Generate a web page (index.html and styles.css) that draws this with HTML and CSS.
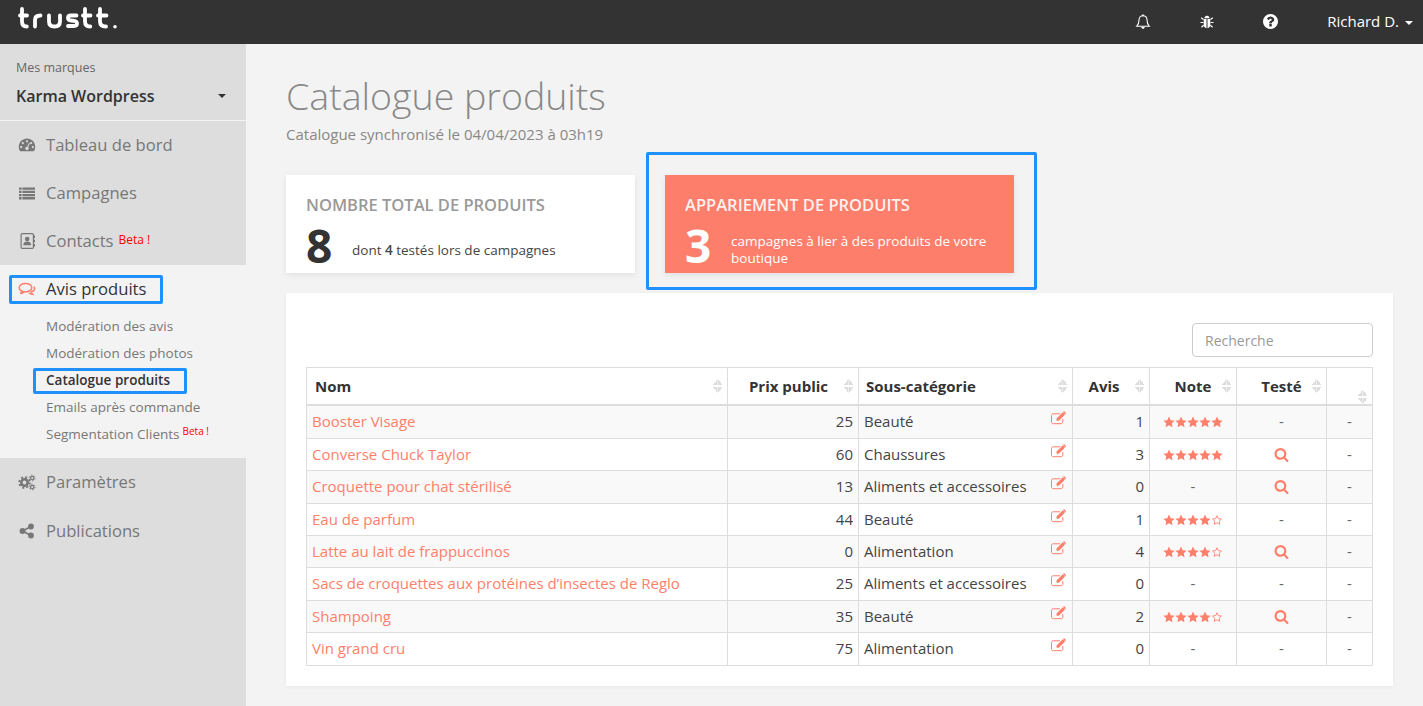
FILE: index.html
```html
<!DOCTYPE html>
<html lang="fr">
<head>
<meta charset="utf-8">
<title>Catalogue produits</title>
<link rel="stylesheet" href="styles.css">
</head>
<body>
<svg class="defs" width="0" height="0" aria-hidden="true">
  <symbol id="i-star" viewBox="0 0 24 24"><path d="M12 1l3.400 7.300 7.900 1-5.800 5.400 1.500 7.900-7-3.900-7 3.900 1.500-7.900L.7 9.300l7.900-1z"/></symbol>
  <symbol id="i-star-o" viewBox="0 0 24 24"><path fill="none" stroke="currentColor" stroke-width="1.800" d="M12 3.500l2.700 5.800 6.200.8-4.500 4.300 1.100 6.200-5.500-3-5.500 3 1.100-6.200-4.500-4.300 6.200-.8z"/></symbol>
  <symbol id="i-search" viewBox="0 0 1792 1792"><path d="M1216 832q0-185-131.500-316.500t-316.500-131.500-316.500 131.500-131.500 316.500 131.500 316.500 316.500 131.500 316.500-131.500 131.500-316.500zm512 832q0 52-38 90t-90 38q-54 0-90-38l-343-342q-179 124-399 124-143 0-273.500-55.500t-225-150-150-225-55.500-273.500 55.500-273.500 150-225 225-150 273.500-55.500 273.500 55.500 225 150 150 225 55.500 273.500q0 220-124 399l343 343q37 37 37 90z"/></symbol>
  <symbol id="i-edit" viewBox="0 0 16 14"><path fill="none" stroke="currentColor" stroke-width="1" d="M11.800 8v3c0 1-.7 1.700-1.700 1.700H2.200C1.200 12.700.5 12 .5 11V4.500c0-1 .7-1.700 1.700-1.700H9"/><path d="M5.500 7.500L11.800 1.200l2.300 2.300-6.300 6.300H5.500zM12.500.5c.3-.3.700-.3 1 0l1.300 1.300c.3.300.3.700 0 1l-.4.400-2.300-2.300z"/></symbol>
</svg>

<header class="topbar">
  <svg class="logo" width="100" height="24" viewBox="0 0 100 24" role="img" aria-label="trustt">
    <g fill="none" stroke="#fff" stroke-width="3.800" stroke-linecap="round" stroke-linejoin="round">
      <path d="M4 3v12.500c0 3.300 1.500 5 4.800 5M2 9.500h7"/>
      <path d="M17 20.500v-6.500c0-3 1.500-4.500 5.500-4.500"/>
      <path d="M31 9.500v6c0 3.300 2 5 5.500 5s5.500-1.700 5.500-5v-6"/>
      <path d="M58.500 9.500h-5.500c-2 0-3 1-3 2.500s1 2.300 3 2.500l3 .3c2 .2 3 1 3 2.700s-1 2.500-3 2.500h-6"/>
      <path d="M67 3v12.500c0 3.300 1.500 5 5.300 5M65 9.500h7.500"/>
      <path d="M82 3v12.500c0 3.300 1.500 5 6 5M80 9.500h8.500"/>
    </g>
    <circle cx="97" cy="20.800" r="1.800" fill="#fff"/>
  </svg>
  <nav class="topnav">
    <svg class="top-icon" width="16" height="16" viewBox="0 0 16 16" aria-hidden="true"><path fill="none" stroke="#fff" stroke-width="1.100" d="M8 1.800c2.600 0 4 2 4 4.300 0 3.400 1 5 2.300 6.200H1.700C3 11.100 4 9.500 4 6.100 4 3.800 5.400 1.800 8 1.800z"/><path fill="#fff" d="M6.300 13h3.400c0 1-.8 1.800-1.700 1.800S6.300 14 6.300 13zM7.200.6h1.600v1.600H7.200z"/></svg>
    <svg class="top-icon" width="16" height="16" viewBox="0 0 16 16" aria-hidden="true"><g fill="#fff"><path d="M4.700 5h2.800v9.200c-1.800-.2-2.800-1.500-2.800-3.600zM8.500 5h2.800v5.600c0 2.100-1 3.400-2.800 3.600zM5.400 4.200C5.500 2.700 6.500 1.700 8 1.700s2.500 1 2.600 2.500z"/></g><path fill="none" stroke="#fff" stroke-width="1.200" d="M4.500 5.500L2.200 3.700M11.500 5.500l2.300-1.800M1.500 8.500h3M11.500 8.500h3M4.700 11.300l-2.300 2M11.300 11.300l2.300 2"/></svg>
    <svg class="top-icon" width="15" height="15" viewBox="128 128 1536 1536" aria-hidden="true"><path fill="#fff" d="M1024 1376v-192q0-14-9-23t-23-9h-192q-14 0-23 9t-9 23v192q0 14 9 23t23 9h192q14 0 23-9t9-23zm256-672q0-88-55.500-163t-138.500-116-170-41q-243 0-371 213-15 24 8 42l132 100q7 6 19 6 16 0 25-12 53-68 86-92 34-24 86-24 48 0 85.500 26t37.500 59q0 38-20 61t-68 45q-63 28-115.500 86.500t-52.500 125.500v36q0 14 9 23t23 9h192q14 0 23-9t9-23q0-19 21.500-49.500t54.500-49.500q32-18 49-28.500t46-35 44.500-48 28-60.500 12.500-81zm384 192q0 209-103 385.500t-279.500 279.500-385.500 103-385.500-103-279.500-279.500-103-385.500 103-385.500 279.500-279.500 385.500-103 385.500 103 279.500 279.500 103 385.500z"/></svg>
    <span class="user">Richard D.<span class="caret caret-white"></span></span>
  </nav>
</header>

<div class="shell">
  <aside class="sidebar">
    <div class="brand">
      <div class="brand-label">Mes marques</div>
      <div class="brand-name"><span>Karma Wordpress</span><span class="caret caret-dark"></span></div>
    </div>
    <ul class="menu">
      <li class="menu-item">
        <svg class="menu-icon" width="18" height="18" viewBox="0 0 18 18" aria-hidden="true"><path fill="currentColor" fill-rule="evenodd" d="M9 2.500c4.500 0 8.200 3.600 8.200 8.200 0 1.700-.5 3.200-1.300 4.500H2.100C1.300 13.900.8 12.400.8 10.700.8 6.100 4.500 2.500 9 2.500zM9 4.200a1.100 1.100 0 100 2.200 1.100 1.100 0 000-2.200zM4.800 6a1.100 1.100 0 100 2.200 1.100 1.100 0 000-2.200zM13.200 6a1.100 1.100 0 100 2.200 1.100 1.100 0 000-2.200zM3.100 10a1.100 1.100 0 100 2.200 1.100 1.100 0 000-2.200zM14.900 10a1.100 1.100 0 100 2.200 1.100 1.100 0 000-2.200zM11 6.800L9.200 10.700a1.700 1.700 0 10.900.400L12 7.200z"/></svg>
        <span>Tableau de bord</span>
      </li>
      <li class="menu-item">
        <svg class="menu-icon" width="18" height="18" viewBox="0 0 18 18" aria-hidden="true"><path fill="currentColor" d="M1 3.500h2.600v2.300H1zM4.400 3.500H17v2.300H4.400zM1 6.700h2.600V9H1zM4.400 6.700H17V9H4.400zM1 9.900h2.600v2.300H1zM4.400 9.900H17v2.300H4.400zM1 13.100h2.600v2.300H1zM4.400 13.100H17v2.300H4.400z"/></svg>
        <span>Campagnes</span>
      </li>
      <li class="menu-item">
        <svg class="menu-icon" width="18" height="18" viewBox="0 0 18 18" aria-hidden="true"><rect x="3.100" y="1.600" width="12.300" height="14.800" rx="1.200" fill="none" stroke="currentColor" stroke-width="1.200"/><path fill="currentColor" d="M15.800 3.500h1.200v2.500h-1.200zM15.800 7.800h1.200v2.500h-1.200zM15.800 12h1.200v2.500h-1.200z"/><circle cx="9.200" cy="7" r="2.300" fill="currentColor"/><path fill="currentColor" d="M5.300 13.300c0-2.500 1.300-3.700 3.900-3.700s3.900 1.200 3.900 3.700z"/></svg>
        <span>Contacts</span><sup class="beta">Beta !</sup>
      </li>
    </ul>
    <div class="menu-open">
      <div class="menu-item menu-item-active">
        <svg class="menu-icon menu-icon-accent" width="18" height="18" viewBox="0 0 18 18" aria-hidden="true"><g fill="none" stroke="currentColor" stroke-width="1.500"><ellipse cx="7.500" cy="7.700" rx="6.300" ry="4.300"/><path d="M4 11.200c-.3 1.100-.9 1.800-1.700 2.300 1.500-.1 2.700-.6 3.700-1.500"/><path d="M11 12.800c.8.900 1.900 1.400 3.600 1.500-.7-.6-1.200-1.300-1.300-2.300 2-.6 3.300-1.900 3.300-3.400 0-.8-.3-1.500-.9-2.100"/></g></svg>
        <span>Avis produits</span>
      </div>
      <ul class="submenu">
        <li class="sub-item">Modération des avis</li>
        <li class="sub-item">Modération des photos</li>
        <li class="sub-item sub-item-active">Catalogue produits</li>
        <li class="sub-item">Emails après commande</li>
        <li class="sub-item">Segmentation Clients<sup class="beta beta-small">Beta !</sup></li>
      </ul>
    </div>
    <ul class="menu">
      <li class="menu-item">
        <svg class="menu-icon" width="18" height="18" viewBox="0 0 18 18" aria-hidden="true"><g fill="none" stroke="currentColor"><circle cx="6.500" cy="9.500" r="3.200" stroke-width="2.600"/><circle cx="6.500" cy="9.500" r="5.300" stroke-width="1.800" stroke-dasharray="2.100 2.060"/><circle cx="14.200" cy="5" r="1.700" stroke-width="1.200"/><circle cx="14.200" cy="5" r="2.900" stroke-width="1" stroke-dasharray="1.400 1.640"/><circle cx="14.200" cy="14" r="1.700" stroke-width="1.200"/><circle cx="14.200" cy="14" r="2.900" stroke-width="1" stroke-dasharray="1.400 1.640"/></g></svg>
        <span>Paramètres</span>
      </li>
      <li class="menu-item menu-item-last">
        <svg class="menu-icon" width="18" height="18" viewBox="0 0 18 18" aria-hidden="true"><g fill="currentColor"><circle cx="4.500" cy="9" r="2.900"/><circle cx="13" cy="4.500" r="2.900"/><circle cx="13" cy="13.500" r="2.900"/></g><path stroke="currentColor" stroke-width="1.500" d="M4.500 9L13 4.500M4.500 9L13 13.500"/></svg>
        <span>Publications</span>
      </li>
    </ul>
  </aside>

  <main class="content">
    <h1 class="page-title">Catalogue produits</h1>
    <p class="page-sub">Catalogue synchronisé le 04/04/2023 à 03h19</p>

    <section class="stats">
      <div class="stat">
        <h2 class="stat-title">NOMBRE TOTAL DE PRODUITS</h2>
        <div class="stat-body"><span class="stat-num">8</span><span class="stat-text">dont <b>4</b> testés lors de campagnes</span></div>
      </div>
      <div class="stat stat-accent">
        <h2 class="stat-title">APPARIEMENT DE PRODUITS</h2>
        <div class="stat-body"><span class="stat-num">3</span><span class="stat-text">campagnes à lier à des produits de votre boutique</span></div>
      </div>
    </section>

    <section class="panel">
      <div class="toolbar"><input class="search" type="text" placeholder="Recherche"></div>
      <table class="products">
        <colgroup>
          <col class="c-name"><col class="c-price"><col class="c-cat"><col class="c-avis"><col class="c-note"><col class="c-test"><col class="c-last">
        </colgroup>
        <thead>
          <tr>
            <th class="th-left">Nom<span class="sort"></span></th>
            <th class="th-price">Prix public<span class="sort"></span></th>
            <th class="th-left th-cat">Sous-catégorie<span class="sort"></span></th>
            <th class="th-avis">Avis<span class="sort"></span></th>
            <th>Note<span class="sort"></span></th>
            <th>Testé<span class="sort"></span></th>
            <th><span class="sort sort-low"></span></th>
          </tr>
        </thead>
        <tbody>
          <tr><td class="name">Booster Visage</td><td class="num">25</td><td>Beauté<svg class="edit"><use href="#i-edit"/></svg></td><td class="num">1</td><td class="mid"><span class="stars"><svg><use href="#i-star"/></svg><svg><use href="#i-star"/></svg><svg><use href="#i-star"/></svg><svg><use href="#i-star"/></svg><svg><use href="#i-star"/></svg></span></td><td class="mid">-</td><td class="mid">-</td></tr>
          <tr><td class="name">Converse Chuck Taylor</td><td class="num">60</td><td>Chaussures<svg class="edit"><use href="#i-edit"/></svg></td><td class="num">3</td><td class="mid"><span class="stars"><svg><use href="#i-star"/></svg><svg><use href="#i-star"/></svg><svg><use href="#i-star"/></svg><svg><use href="#i-star"/></svg><svg><use href="#i-star"/></svg></span></td><td class="mid"><svg class="loupe"><use href="#i-search"/></svg></td><td class="mid">-</td></tr>
          <tr><td class="name">Croquette pour chat stérilisé</td><td class="num">13</td><td>Aliments et accessoires<svg class="edit"><use href="#i-edit"/></svg></td><td class="num">0</td><td class="mid">-</td><td class="mid"><svg class="loupe"><use href="#i-search"/></svg></td><td class="mid">-</td></tr>
          <tr><td class="name">Eau de parfum</td><td class="num">44</td><td>Beauté<svg class="edit"><use href="#i-edit"/></svg></td><td class="num">1</td><td class="mid"><span class="stars"><svg><use href="#i-star"/></svg><svg><use href="#i-star"/></svg><svg><use href="#i-star"/></svg><svg><use href="#i-star"/></svg><svg><use href="#i-star-o"/></svg></span></td><td class="mid">-</td><td class="mid">-</td></tr>
          <tr><td class="name">Latte au lait de frappuccinos</td><td class="num">0</td><td>Alimentation<svg class="edit"><use href="#i-edit"/></svg></td><td class="num">4</td><td class="mid"><span class="stars"><svg><use href="#i-star"/></svg><svg><use href="#i-star"/></svg><svg><use href="#i-star"/></svg><svg><use href="#i-star"/></svg><svg><use href="#i-star-o"/></svg></span></td><td class="mid"><svg class="loupe"><use href="#i-search"/></svg></td><td class="mid">-</td></tr>
          <tr><td class="name">Sacs de croquettes aux protéines d’insectes de Reglo</td><td class="num">25</td><td>Aliments et accessoires<svg class="edit"><use href="#i-edit"/></svg></td><td class="num">0</td><td class="mid">-</td><td class="mid">-</td><td class="mid">-</td></tr>
          <tr><td class="name">Shampoing</td><td class="num">35</td><td>Beauté<svg class="edit"><use href="#i-edit"/></svg></td><td class="num">2</td><td class="mid"><span class="stars"><svg><use href="#i-star"/></svg><svg><use href="#i-star"/></svg><svg><use href="#i-star"/></svg><svg><use href="#i-star"/></svg><svg><use href="#i-star-o"/></svg></span></td><td class="mid"><svg class="loupe"><use href="#i-search"/></svg></td><td class="mid">-</td></tr>
          <tr><td class="name">Vin grand cru</td><td class="num">75</td><td>Alimentation<svg class="edit"><use href="#i-edit"/></svg></td><td class="num">0</td><td class="mid">-</td><td class="mid">-</td><td class="mid">-</td></tr>
        </tbody>
      </table>
    </section>
  </main>
</div>
</body>
</html>
```

FILE: styles.css
```css
*, *::before, *::after { box-sizing: border-box; }
html, body { height: 100%; }
body {
  margin: 0;
  overflow: hidden;
  background: #f3f3f3;
  color: #444;
  font-family: "Open Sans", "Liberation Sans", sans-serif;
  font-size: 15px;
  line-height: 1.42857;
  display: flex;
  flex-direction: column;
}
.defs { position: absolute; }
ul { list-style: none; margin: 0; padding: 0; }

.topbar {
  flex: 0 0 44px;
  background: #333;
  display: flex;
  align-items: center;
  justify-content: space-between;
  padding: 0 10px 0 18px;
}
.logo { display: block; margin-top: -8px; }
.topnav { display: flex; align-items: center; }
.top-icon { display: block; margin-right: 48px; }
.user { color: #fff; font-size: 15px; margin-left: 1px; }
.caret {
  display: inline-block;
  width: 0; height: 0;
  border-left: 4px solid transparent;
  border-right: 4px solid transparent;
  border-top: 4px solid #fff;
}
.caret-white { margin-left: 6px; vertical-align: 2px; }
.caret-dark { border-top-color: #333; }

.shell { flex: 1; display: flex; min-height: 0; }
.sidebar { flex: 0 0 246px; background: #ddd; color: #777; }
.brand { padding: 14px 20px 9px 16px; border-bottom: 1px solid #f3f3f3; height: 77px; }
.brand-label { font-size: 12.500px; color: #666; line-height: 20px; }
.brand-name {
  display: flex; align-items: center; justify-content: space-between;
  font-size: 16px; font-weight: 600; color: #333; line-height: 24px; margin-top: 6px;
}
.menu-item {
  height: 48px;
  display: flex; align-items: center;
  padding-left: 18px;
  font-size: 16.600px;
  color: #777;
  position: relative;
}
.menu-item-last { margin-top: 1px; }
.menu-icon { flex: none; margin-right: 10px; color: #777; }
.menu-icon-accent { color: #ff7f6b; }
.beta { color: #f00; font-size: 12px; margin-left: 5px; line-height: 1; align-self: center; margin-top: -3px; }
.menu-open { background: #f3f3f3; height: 193px; }
.menu-item-active { color: #333; }
.menu-item-active::after {
  content: "";
  position: absolute;
  left: 9px; top: 10px;
  width: 154px; height: 29px;
  border: 3px solid #1e90ff;
  border-radius: 2px;
}
.sub-item {
  height: 27px; line-height: 27px;
  padding-left: 46px;
  font-size: 13.500px;
  color: #777;
  position: relative;
}
.sub-item-active { color: #333; font-weight: 600; }
.sub-item-active::after {
  content: "";
  position: absolute;
  left: 33px; top: 1px;
  width: 154px; height: 26px;
  border: 3px solid #1e90ff;
  border-radius: 2px;
}
.beta-small { font-size: 10px; margin-left: 3px; vertical-align: 4px; }

.content { flex: 1; min-width: 0; padding: 32px 30px 0 40px; }
.page-title { margin: 0; font-size: 37.500px; font-weight: 300; color: #888; line-height: 40px; }
.page-sub { margin: 8px 0 0; font-size: 15px; color: #888; line-height: 20px; }
.stats { display: flex; gap: 30px; margin-top: 31px; }
.stat {
  width: 349px; height: 98px;
  background: #fff;
  padding: 20px;
  box-shadow: 0 2px 6px rgba(0,0,0,.08);
  position: relative;
}
.stat-title { margin: 0; font-size: 16.500px; font-weight: 600; line-height: 20px; color: #999; }
.stat-body { display: flex; align-items: center; margin-top: 7px; height: 46px; }
.stat-num { flex: 0 0 46px; font-size: 46px; font-weight: 700; line-height: 46px; color: #333; }
.stat-text { font-size: 13.500px; line-height: 17px; color: #444; margin-top: 10px; }
.stat-text b { font-weight: 600; }
.stat-accent { background: #fd7e6a; }
.stat-accent .stat-title, .stat-accent .stat-num, .stat-accent .stat-text { color: #fff; }
.stat-accent .stat-title { color: #fff; opacity: .9; }
.stat-accent::after {
  content: "";
  position: absolute;
  left: -19px; top: -23px;
  width: 391px; height: 138px;
  border: 3px solid #1e90ff;
  border-radius: 2px;
}

.panel {
  margin-top: 20px;
  width: 1107px; height: 393px;
  background: #fff;
  padding: 30px 20px 20px;
  box-shadow: 0 1px 4px rgba(0,0,0,.05);
}
.toolbar { display: flex; justify-content: flex-end; margin-bottom: 10px; }
.search {
  width: 181px; height: 34px;
  border: 1px solid #ccc; border-radius: 4px;
  padding: 0 12px;
  font: 14px "Open Sans", sans-serif;
  color: #555;
}
.search::placeholder { color: #999; opacity: 1; }

.products { width: 1066px; table-layout: fixed; border-collapse: collapse; }
.c-name { width: 421px; } .c-price { width: 131px; } .c-cat { width: 214px; }
.c-avis { width: 77px; } .c-note { width: 87px; } .c-test { width: 90px; } .c-last { width: 46px; }
.products th, .products td { border: 1px solid #ddd; }
.products th {
  position: relative;
  height: 37.850px;
  padding: 1px 8px 0;
  border-bottom: 2px solid #ddd;
  font-size: 15px; font-weight: 700; color: #333;
  text-align: center;
}
.products .th-left { text-align: left; }
.products .th-cat { padding-left: 7px; }
.products .th-price { padding-right: 17px; }
.products .th-avis { padding-right: 22px; }
.sort {
  position: absolute; right: 5px; top: 11px;
  width: 9px; height: 14px;
  background:
    linear-gradient(to bottom right, transparent 50%, #ddd 50%) left top / 50% 6px no-repeat,
    linear-gradient(to bottom left, transparent 50%, #ddd 50%) right top / 50% 6px no-repeat,
    linear-gradient(to top right, transparent 50%, #ddd 50%) left bottom / 50% 6px no-repeat,
    linear-gradient(to top left, transparent 50%, #ddd 50%) right bottom / 50% 6px no-repeat;
}
.sort-low { top: 22px; }
.products td { padding: 5px; color: #444; }
.products tbody tr:nth-child(odd) td { background: #f9f9f9; }
.products .name { color: #ff7f6b; }
.products .num { text-align: right; }
.products .mid { text-align: center; color: #666; }
.edit { float: right; width: 16px; height: 14px; margin: 0; color: #ff7f6b; fill: #ff7f6b; }
.stars { display: inline-flex; vertical-align: -1px; color: #ff7f6b; fill: #ff7f6b; }
.stars svg { width: 12px; height: 12px; display: block; }
.loupe { width: 15px; height: 15px; display: inline-block; vertical-align: -2px; fill: #ff7f6b; }
```
